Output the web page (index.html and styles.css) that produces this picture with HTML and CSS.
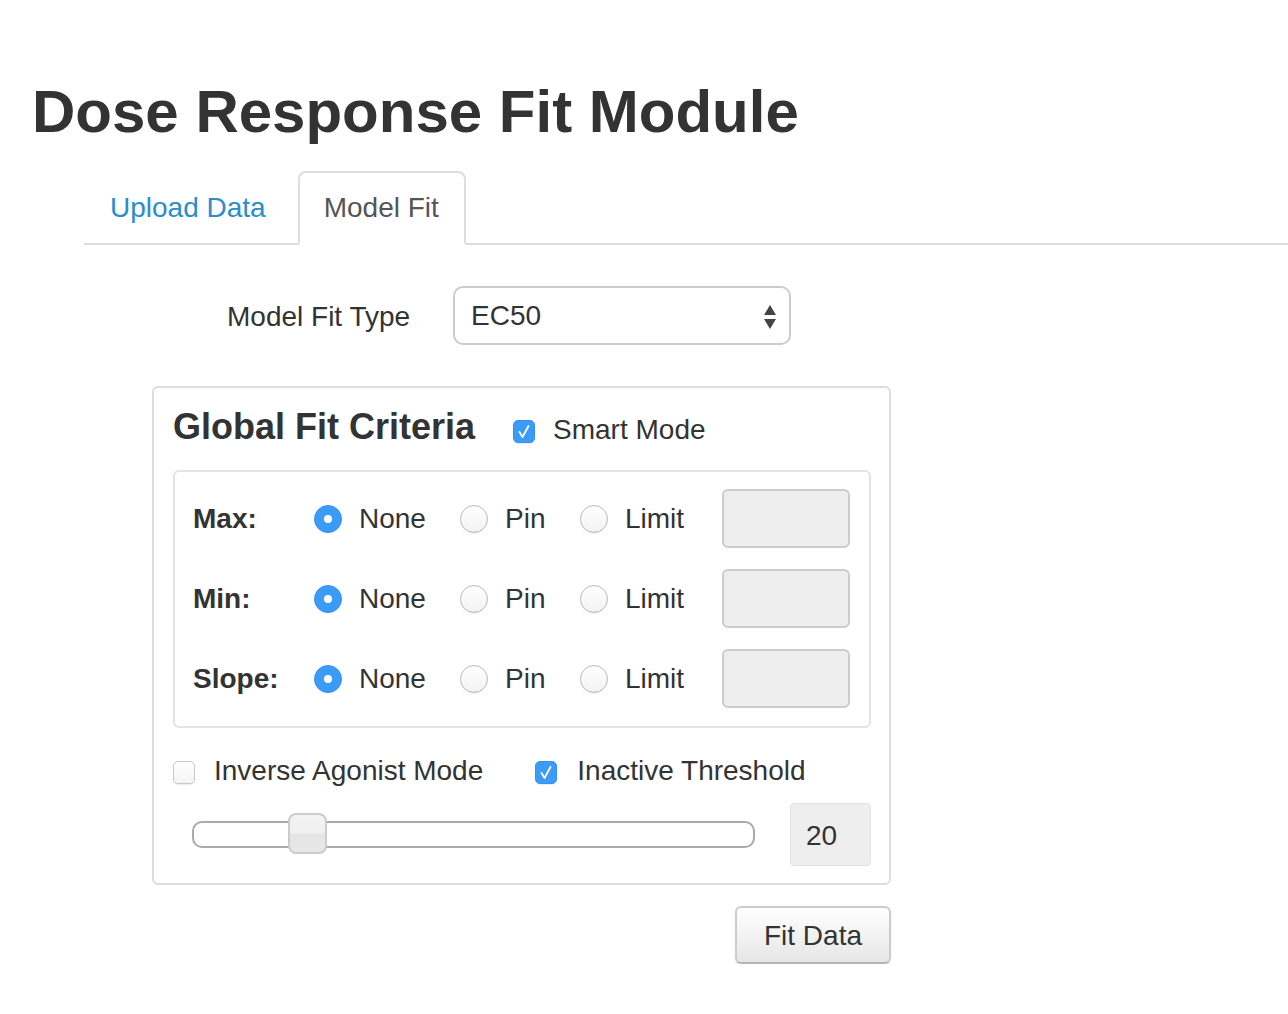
FILE: index.html
```html
<!DOCTYPE html>
<html>
<head>
<meta charset="utf-8">
<title>Dose Response Fit Module</title>
<link rel="stylesheet" href="styles.css">
</head>
<body>
<h1 class="title">Dose Response Fit Module</h1>
<ul class="tabs">
  <li class="tab"><a class="tab-link">Upload Data</a></li>
  <li class="tab active"><a class="tab-link">Model Fit</a></li>
</ul>
<div class="content">
  <div class="form-row">
    <label class="form-label">Model Fit Type</label>
    <div class="select">
      <span class="select-value">EC50</span>
      <svg class="select-arrows" width="14" height="26" viewBox="0 0 14 26"><path d="M7 1 L13 11 L1 11 Z" fill="#444"/><path d="M1 15 L13 15 L7 25 Z" fill="#444"/></svg>
    </div>
  </div>
  <div class="panel">
    <div class="panel-head">
      <h3 class="panel-title">Global Fit Criteria</h3>
      <span class="check on head-check"><svg width="22" height="23" viewBox="0 0 22 23"><path d="M6.5 12 L9.5 17 L15.5 6" fill="none" stroke="#fff" stroke-width="1.8" stroke-linecap="round" stroke-linejoin="round"/></svg></span>
      <span class="check-label head-label">Smart Mode</span>
    </div>
    <div class="well">
      <div class="crit-row">
        <span class="crit-label">Max:</span>
        <span class="opt"><span class="radio on"></span>None</span>
        <span class="opt"><span class="radio"></span>Pin</span>
        <span class="opt"><span class="radio"></span>Limit</span>
        <span class="num-input"></span>
      </div>
      <div class="crit-row">
        <span class="crit-label">Min:</span>
        <span class="opt"><span class="radio on"></span>None</span>
        <span class="opt"><span class="radio"></span>Pin</span>
        <span class="opt"><span class="radio"></span>Limit</span>
        <span class="num-input"></span>
      </div>
      <div class="crit-row">
        <span class="crit-label">Slope:</span>
        <span class="opt"><span class="radio on"></span>None</span>
        <span class="opt"><span class="radio"></span>Pin</span>
        <span class="opt"><span class="radio"></span>Limit</span>
        <span class="num-input"></span>
      </div>
    </div>
    <div class="mode-row">
      <span class="check"></span>
      <span class="check-label">Inverse Agonist Mode</span>
      <span class="check on second"><svg width="22" height="23" viewBox="0 0 22 23"><path d="M6.5 12 L9.5 17 L15.5 6" fill="none" stroke="#fff" stroke-width="1.8" stroke-linecap="round" stroke-linejoin="round"/></svg></span>
      <span class="check-label">Inactive Threshold</span>
    </div>
    <div class="slider-row">
      <div class="slider">
        <span class="slider-handle"></span>
      </div>
      <div class="slider-value">20</div>
    </div>
  </div>
  <div class="actions">
    <button class="btn">Fit Data</button>
  </div>
</div>
</body>
</html>
```
FILE: styles.css
```css
* { box-sizing: border-box; }
html, body { margin: 0; padding: 0; background: #fff; }
body {
  font-family: "Liberation Sans", Arial, Helvetica, sans-serif;
  font-size: 28px;
  line-height: 40px;
  color: #333;
  width: 1288px;
  overflow: hidden;
}
.title {
  margin: 79px 0 0 32px;
  font-size: 60px;
  line-height: 66px;
  font-weight: bold;
  color: #333;
}
.tabs {
  list-style: none;
  margin: 26px 0 0 84px;
  padding: 0;
  display: flex;
  border-bottom: 2px solid #ddd;
}
.tab {
  margin-right: 5px;
  margin-bottom: -2px;
}
.tab-link {
  display: block;
  padding: 15px 25px 15px 24px;
  border: 2px solid transparent;
  border-radius: 8px 8px 0 0;
  color: #2a8dce;
  line-height: 40px;
}
.tab.active .tab-link {
  color: #555;
  background: #fff;
  border-color: #ddd;
  border-bottom-color: #fff;
}
.content {
  width: 891px;
  padding-left: 152px;
}
.form-row {
  display: flex;
  align-items: center;
  margin-top: 41px;
  padding-left: 75px;
}
.form-label {
  width: 226px;
  padding-top: 2px;
}
.select {
  width: 338px;
  height: 59px;
  border: 2px solid #ccc;
  border-radius: 10px;
  display: flex;
  align-items: center;
  justify-content: space-between;
  padding: 1px 12px 0 16px;
  background: #fff;
}
.select-arrows { display: block; margin-top: 1px; }
.panel {
  margin-top: 41px;
  width: 739px;
  border: 2px solid #ddd;
  border-radius: 6px;
  padding: 19px 18px 17px 19px;
}
.panel-head {
  display: flex;
  align-items: center;
  height: 40px;
}
.panel-title {
  margin: 0 38px 0 0;
  font-size: 36px;
  line-height: 40px;
  font-weight: bold;
  color: #333;
}
.check {
  width: 22px;
  height: 23px;
  border-radius: 5px;
  border: 1px solid #c8c8c8;
  background: linear-gradient(#fff, #f4f4f4);
  box-shadow: 0 1px 1px rgba(0,0,0,0.08);
  flex: none;
  margin-right: 19px;
  margin-top: 3px;
  display: flex;
}
.check.on {
  background: #3d9bf8;
  border-color: #3592ee;
}
.check.on svg { display: block; margin: -1px; }
.head-check { margin-top: 8px; margin-right: 18px; }
.head-label { margin-top: 6px; }
.check.second { margin-left: 52px; margin-right: 20px; }
.well {
  margin-top: 23px;
  border: 2px solid #e3e3e3;
  border-radius: 6px;
  padding: 17px 19px 18px 18px;
  display: flex;
  flex-direction: column;
  gap: 21px;
}
.crit-row {
  display: grid;
  grid-template-columns: 121px 146px 120px 142px 128px;
  align-items: center;
  height: 59px;
}
.crit-label { font-weight: bold; }
.opt {
  display: flex;
  align-items: center;
}
.radio {
  width: 28px;
  height: 28px;
  border-radius: 50%;
  border: 1px solid #b9b9b9;
  background: linear-gradient(#fff, #f3f3f3);
  box-shadow: 0 1px 1px rgba(0,0,0,0.06);
  margin-right: 17px;
  flex: none;
  position: relative;
}
.radio.on {
  background: #3d9bf8;
  border-color: #3792f0;
}
.radio.on::after {
  content: "";
  position: absolute;
  left: 9px;
  top: 9px;
  width: 8px;
  height: 8px;
  border-radius: 50%;
  background: #fff;
}
.num-input {
  display: block;
  width: 128px;
  height: 59px;
  background: #eee;
  border: 2px solid #ccc;
  border-radius: 6px;
}
.mode-row {
  display: flex;
  align-items: center;
  margin-top: 23px;
  height: 40px;
}
.slider-row {
  display: flex;
  align-items: center;
  margin-top: 12px;
}
.slider {
  position: relative;
  margin-left: 19px;
  width: 563px;
  height: 27px;
  border: 2px solid #aaa;
  border-radius: 10px;
  background: #fff;
}
.slider-handle {
  position: absolute;
  left: 94px;
  top: -10px;
  width: 39px;
  height: 41px;
  border: 2px solid #ccc;
  border-radius: 8px;
  background: linear-gradient(#f3f3f3 0%, #f0f0f0 48%, #e5e5e5 52%, #e8e8e8 100%);
}
.slider-value {
  margin-left: 35px;
  width: 81px;
  height: 63px;
  background: #eee;
  border: 1px solid #e2e2e2;
  border-radius: 4px;
  padding-left: 15px;
  padding-top: 2px;
  display: flex;
  align-items: center;
}
.actions {
  display: flex;
  justify-content: flex-end;
  width: 739px;
  margin-top: 21px;
}
.btn {
  font-family: "Liberation Sans", Arial, Helvetica, sans-serif;
  font-size: 28px;
  line-height: 40px;
  color: #333;
  width: 156px;
  height: 58px;
  padding: 2px 0 0;
  border: 2px solid #ccc;
  border-bottom-color: #b5b5b5;
  border-radius: 6px;
  background: linear-gradient(#fff, #e6e6e6);
  box-shadow: 0 1px 2px rgba(0,0,0,0.08);
}
```
